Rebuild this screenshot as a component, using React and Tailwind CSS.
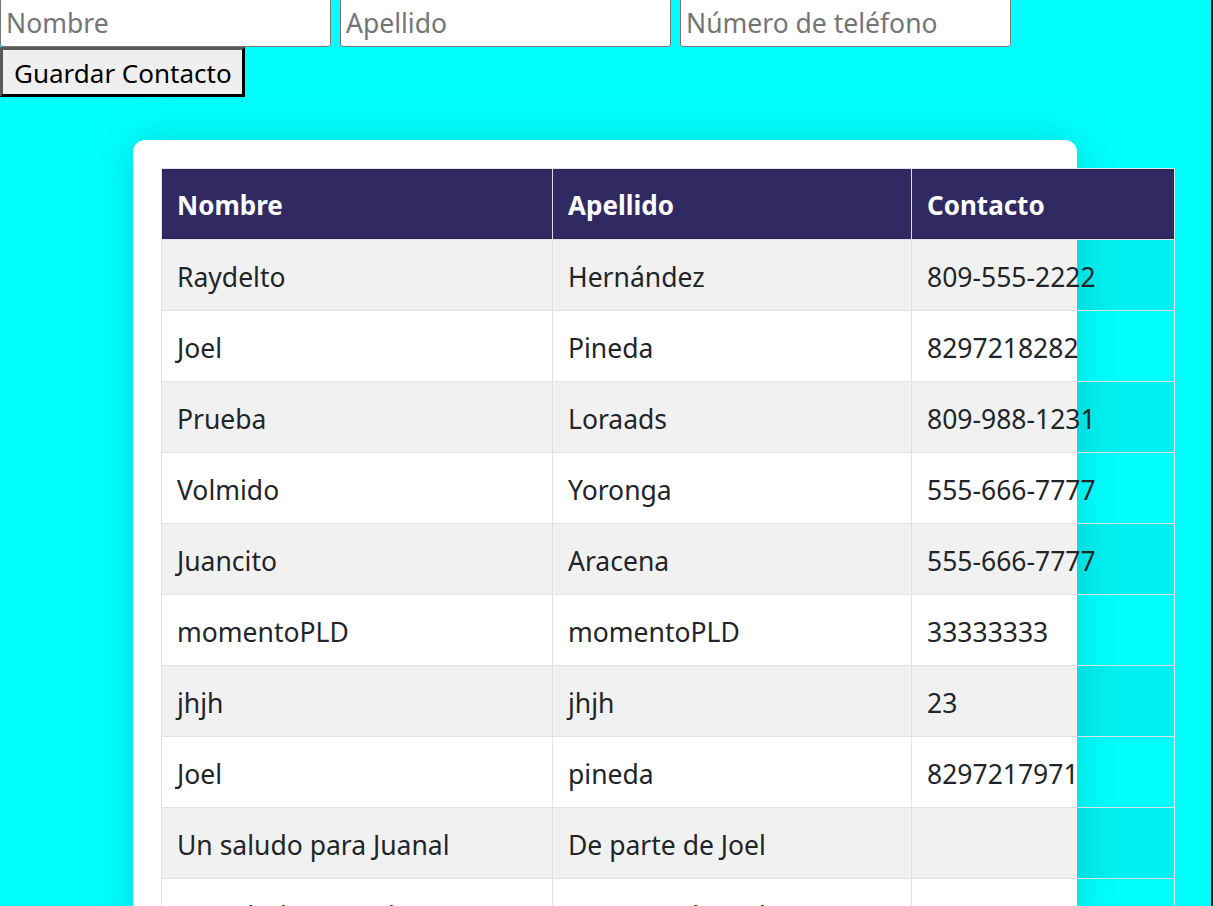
import React from "react";

const rows = [
  ["Raydelto", "Hernández", "809-555-2222"],
  ["Joel", "Pineda", "8297218282"],
  ["Prueba", "Loraads", "809-988-1231"],
  ["Volmido", "Yoronga", "555-666-7777"],
  ["Juancito", "Aracena", "555-666-7777"],
  ["momentoPLD", "momentoPLD", "33333333"],
  ["jhjh", "jhjh", "23"],
  ["Joel", "pineda", "8297217971"],
  ["Un saludo para Juanal", "De parte de Joel", ""],
  ["Un saludo para el grupo", "De parte de Joel", "8296296484"],
];

export default function App() {
  return (
    <div
      className="min-h-[906px] h-[906px] overflow-hidden bg-[#00ffff] border-r-2 border-[#1e1e1e]"
      style={{ fontFamily: '"Noto Sans", "Open Sans", sans-serif' }}
    >
      <div className="flex gap-[9px] -mt-[2px]">
        {["Nombre", "Apellido", "Número de teléfono"].map((p) => (
          <input
            key={p}
            placeholder={p}
            className="w-[331px] h-[49px] bg-white border border-[#767676] rounded-[3px] px-[5px] text-[26.5px] text-[#222] placeholder:text-[#757575] outline-none"
          />
        ))}
      </div>
      <button className="block w-[245px] h-[50px] bg-[#efefef] border-[3px] border-t-[#5a5a5a] border-l-[#5a5a5a] border-r-black border-b-black text-[26px] text-black text-left pl-[11px] pt-[2px]">
        Guardar Contacto
      </button>
      <div className="ml-[133px] mt-[43px] w-[944px] bg-white rounded-[12px] p-[28px] pb-0 h-[800px] shadow-[0_0_45px_rgba(0,0,0,0.16)]">
        <table className="table-fixed border-collapse w-[1013px] text-[26.5px] text-[#212529]">
          <colgroup>
            <col className="w-[391px]" />
            <col className="w-[359px]" />
            <col className="w-[263px]" />
          </colgroup>
          <thead>
            <tr className="bg-[#312a62] text-white">
              {["Nombre", "Apellido", "Contacto"].map((h) => (
                <th
                  key={h}
                  className="h-[71px] border border-[#dee2e6] text-left font-bold text-[26px] px-[15px] pt-[3px]"
                >
                  {h}
                </th>
              ))}
            </tr>
          </thead>
          <tbody>
            {rows.map((r, i) => (
              <tr key={i} className={i % 2 === 0 ? "bg-black/[0.055]" : ""}>
                {r.map((c, j) => (
                  <td
                    key={j}
                    className="h-[71px] border border-[#dee2e6] px-[15px] pt-[5px] whitespace-nowrap"
                  >
                    {c}
                  </td>
                ))}
              </tr>
            ))}
          </tbody>
        </table>
      </div>
    </div>
  );
}
